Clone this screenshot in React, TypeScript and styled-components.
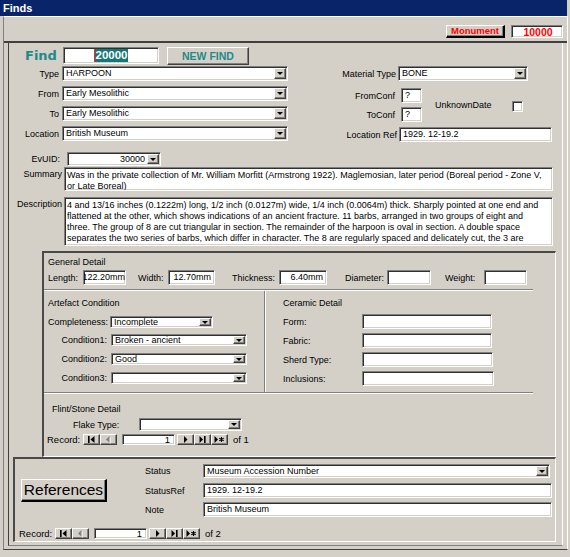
import React from "react";
import styled, { createGlobalStyle, css } from "styled-components";

const FACE = "#d4d0c8";
const SANS = `"Liberation Sans", Arial, sans-serif`;
const TEAL = "#1e8a8a";

const GlobalStyle = createGlobalStyle`
  html, body { margin: 0; padding: 0; background: ${FACE}; }
  body { font-family: ${SANS}; font-size: 9px; color: #000; }
  * { box-sizing: border-box; }
`;

const sunken = css`
  background: #fff;
  border: 1px solid;
  border-color: #808080 #fff #fff #808080;
  box-shadow: inset 1px 1px 0 #303030, inset -1px -1px 0 ${FACE};
`;

const raised = css`
  background: ${FACE};
  border: 1px solid;
  border-color: #fff #404040 #404040 #fff;
  box-shadow: inset -1px -1px 0 #808080;
`;

const Window = styled.div`
  width: 570px;
  height: 557px;
  background: ${FACE};
  display: flex;
  flex-direction: column;
  overflow: hidden;
  font-family: ${SANS};
  font-size: 9px;
`;

const TitleBar = styled.div`
  height: 16px;
  margin-right: 3px;
  background: #0a246a;
  color: #fff;
  font-weight: bold;
  font-size: 11px;
  line-height: 16px;
  padding-left: 3px;
`;

const FormArea = styled.div`
  height: 534px;
  margin: 0 2px 0 3px;
  display: flex;
  flex-direction: column;
  border-left: 1px solid #808080;
  border-top: 1px solid #fff;
  border-right: 1px solid #fff;
  border-bottom: 1px solid #404040;
`;

const Header = styled.div`
  height: 26px;
  flex: none;
  display: flex;
  justify-content: flex-end;
  align-items: flex-start;
  padding: 8px 4px 0 0;
  gap: 6px;
  border-bottom: 2px solid #404040;
`;

const ShadowButton = styled.div<{ $w: number; $h: number; $size: number; $color: string; $bold?: boolean }>`
  ${raised};
  width: ${(p) => p.$w}px;
  height: ${(p) => p.$h}px;
  display: flex;
  align-items: center;
  justify-content: center;
  font-size: ${(p) => p.$size}px;
  font-weight: ${(p) => (p.$bold ? "bold" : "normal")};
  color: ${(p) => p.$color};
  border-right: 2px solid #000;
  border-bottom: 2px solid #000;
  line-height: 1;
`;

const MonumentBox = styled.div`
  ${sunken};
  width: 52px;
  height: 13px;
  font-weight: bold;
  font-size: 10.5px;
  color: #ff0000;
  display: flex;
  align-items: center;
  justify-content: center;
  padding-left: 2px;
`;

const Detail = styled.div`
  flex: 1;
  display: flex;
  padding: 0 4px 3px 4px;
`;

const DetailFrame = styled.div`
  flex: 1;
  display: flex;
  flex-direction: column;
  border-left: 1px solid #404040;
  border-right: 1px solid #fff;
  border-bottom: 1px solid #808080;
  padding-top: 4px;
`;

const Row = styled.div<{ $mt?: number; $h?: number; $ml?: number }>`
  display: flex;
  align-items: center;
  flex: none;
  height: ${(p) => p.$h ?? 15}px;
  margin-top: ${(p) => p.$mt ?? 0}px;
  margin-left: ${(p) => p.$ml ?? 0}px;
`;

const TopRow = styled(Row)`
  align-items: flex-start;
`;

const Label = styled.span<{ $w: number; $align?: "left" | "right"; $pr?: number; $ml?: number; $mt?: number }>`
  flex: none;
  width: ${(p) => p.$w}px;
  margin-left: ${(p) => p.$ml ?? 0}px;
  margin-top: ${(p) => p.$mt ?? 0}px;
  padding-right: ${(p) => p.$pr ?? 0}px;
  text-align: ${(p) => p.$align ?? "left"};
  white-space: nowrap;
  line-height: 12px;
`;

const FindLabel = styled.span`
  width: 38px;
  margin-left: 16px;
  font-family: "DejaVu Sans", sans-serif;
  font-weight: bold;
  font-size: 13px;
  color: ${TEAL};
  line-height: 17px;
`;

const FindBox = styled.div`
  ${sunken};
  width: 96px;
  height: 17px;
  display: flex;
  align-items: center;
  justify-content: center;
`;

const Selected = styled.span`
  background: #137878;
  color: #fff;
  font-weight: bold;
  font-size: 11.5px;
  line-height: 13px;
  padding: 0 1px;
  border-left: 1px solid #ff2020;
`;

const NewFindButton = styled.div`
  ${raised};
  width: 82px;
  height: 18px;
  margin-left: 8px;
  display: flex;
  align-items: center;
  justify-content: center;
  font-weight: bold;
  font-size: 10.5px;
  color: ${TEAL};
`;

const Columns = styled.div`
  display: flex;
  margin-top: 1px;
`;

const LeftCol = styled.div`
  width: 279px;
  display: flex;
  flex-direction: column;
`;

const RightCol = styled.div`
  flex: 1;
  display: flex;
  flex-direction: column;
`;

const Box = styled.div<{ $w: number; $h?: number; $ml?: number; $align?: "left" | "right"; $pad?: number }>`
  ${sunken};
  flex: none;
  width: ${(p) => p.$w}px;
  height: ${(p) => p.$h ?? 15}px;
  margin-left: ${(p) => p.$ml ?? 0}px;
  padding: 0 ${(p) => p.$pad ?? 3}px;
  display: flex;
  align-items: center;
  justify-content: ${(p) => (p.$align === "right" ? "flex-end" : "flex-start")};
  white-space: nowrap;
  overflow: hidden;
  line-height: 11px;
`;

const ComboFrame = styled.div<{ $w: number; $h?: number; $ml?: number }>`
  ${sunken};
  flex: none;
  width: ${(p) => p.$w}px;
  height: ${(p) => p.$h ?? 15}px;
  margin-left: ${(p) => p.$ml ?? 0}px;
  display: flex;
  align-items: stretch;
  padding: 1px;
`;

const ComboValue = styled.span<{ $align?: "left" | "right" }>`
  flex: 1;
  display: flex;
  align-items: center;
  justify-content: ${(p) => (p.$align === "right" ? "flex-end" : "flex-start")};
  padding: 0 2px;
  white-space: nowrap;
  overflow: hidden;
  line-height: 11px;
`;

const DropButton = styled.span`
  ${raised};
  flex: none;
  width: 12px;
  display: flex;
  align-items: center;
  justify-content: center;
  &::after {
    content: "";
    display: block;
    width: 0;
    height: 0;
    border-left: 3px solid transparent;
    border-right: 3px solid transparent;
    border-top: 3px solid #000;
  }
`;

type ComboProps = { w: number; h?: number; ml?: number; value?: string; align?: "left" | "right" };
const Combo = ({ w, h, ml, value, align }: ComboProps) => (
  <ComboFrame $w={w} $h={h} $ml={ml}>
    <ComboValue $align={align}>{value}</ComboValue>
    <DropButton />
  </ComboFrame>
);

const ConfBlock = styled.div`
  display: flex;
  align-items: center;
  margin-top: 7px;
  height: 34px;
`;

const ConfCol = styled.div`
  display: flex;
  flex-direction: column;
  gap: 4px;
`;

const CheckBox = styled.span`
  ${sunken};
  width: 11px;
  height: 11px;
  margin-top: 3px;
`;

const MemoBox = styled.div<{ $h: number }>`
  ${sunken};
  width: 489px;
  height: ${(p) => p.$h}px;
  padding: 2px 2px 0 2px;
  overflow: hidden;
  line-height: 11px;
`;

const MemoLine = styled.div`
  white-space: nowrap;
  height: 11px;
`;

const SubFrame = styled.div<{ $ml: number; $w: number; $h: number; $mt?: number }>`
  flex: none;
  margin-left: ${(p) => p.$ml}px;
  margin-top: ${(p) => p.$mt ?? 0}px;
  width: ${(p) => p.$w}px;
  height: ${(p) => p.$h}px;
  border-style: solid;
  border-width: 2px 1px 1px 2px;
  border-color: #4a4a4a #fff #fff #4a4a4a;
  display: flex;
  flex-direction: column;
`;

const SectionTitle = styled.div<{ $mt: number; $pl: number }>`
  margin-top: ${(p) => p.$mt}px;
  padding-left: ${(p) => p.$pl}px;
  height: 12px;
  line-height: 12px;
  flex: none;
`;

const EtchedH = styled.div<{ $w: number; $mt?: number }>`
  flex: none;
  width: ${(p) => p.$w}px;
  height: 2px;
  margin-top: ${(p) => p.$mt ?? 0}px;
  border-top: 1px solid #808080;
  border-bottom: 1px solid #fff;
`;

const EtchedV = styled.div`
  flex: none;
  width: 2px;
  border-left: 1px solid #808080;
  border-right: 1px solid #fff;
`;

const Middle = styled.div`
  display: flex;
  height: 101px;
  flex: none;
`;

const SubCol = styled.div<{ $w: number }>`
  width: ${(p) => p.$w}px;
  display: flex;
  flex-direction: column;
`;

const NavBar = styled.div<{ $mt: number; $ml: number }>`
  display: flex;
  align-items: center;
  height: 11px;
  flex: none;
  margin-top: ${(p) => p.$mt}px;
  margin-left: ${(p) => p.$ml}px;
  font-size: 9.5px;
`;

const NavLabel = styled.span`
  width: 36px;
  line-height: 11px;
`;

const NavButton = styled.span<{ $gap?: number }>`
  ${raised};
  width: 17px;
  height: 11px;
  margin-left: ${(p) => p.$gap ?? 0}px;
  display: flex;
  align-items: center;
  justify-content: center;
  svg { display: block; }
`;

const NavBox = styled.span`
  ${sunken};
  width: 53px;
  height: 11px;
  margin-left: 5px;
  display: flex;
  align-items: center;
  justify-content: flex-end;
  padding-right: 4px;
  line-height: 9px;
`;

const NavOf = styled.span`
  margin-left: 5px;
  line-height: 11px;
`;

type Glyph = "first" | "prev" | "next" | "last" | "new";
const NavGlyph = ({ kind }: { kind: Glyph }) => {
  if (kind === "first")
    return (
      <svg width="9" height="7" viewBox="0 0 9 7">
        <rect x="1" y="0" width="1.6" height="7" fill="#000" />
        <polygon points="7.5,0 3.5,3.5 7.5,7" fill="#000" />
      </svg>
    );
  if (kind === "prev")
    return (
      <svg width="9" height="8" viewBox="0 0 9 8">
        <polygon points="6.5,1 3,4.5 6.5,8" fill="#fff" />
        <polygon points="5.5,0 2,3.5 5.5,7" fill="#808080" />
      </svg>
    );
  if (kind === "next")
    return (
      <svg width="9" height="7" viewBox="0 0 9 7">
        <polygon points="3,0 6.5,3.5 3,7" fill="#000" />
      </svg>
    );
  if (kind === "last")
    return (
      <svg width="9" height="7" viewBox="0 0 9 7">
        <polygon points="1.5,0 5,3.5 1.5,7" fill="#000" />
        <rect x="6" y="0" width="1.6" height="7" fill="#000" />
      </svg>
    );
  return (
    <svg width="11" height="7" viewBox="0 0 11 7">
      <polygon points="0.5,0 4,3.5 0.5,7" fill="#000" />
      <path d="M7.5 1 V6 M5.3 2.2 L9.7 4.8 M5.3 4.8 L9.7 2.2" stroke="#000" strokeWidth="1.1" />
    </svg>
  );
};

const RecordNav = ({ mt, ml, total }: { mt: number; ml: number; total: number }) => (
  <NavBar $mt={mt} $ml={ml}>
    <NavLabel>Record:</NavLabel>
    <NavButton><NavGlyph kind="first" /></NavButton>
    <NavButton><NavGlyph kind="prev" /></NavButton>
    <NavBox>1</NavBox>
    <NavButton $gap={2}><NavGlyph kind="next" /></NavButton>
    <NavButton><NavGlyph kind="last" /></NavButton>
    <NavButton><NavGlyph kind="new" /></NavButton>
    <NavOf>of {total}</NavOf>
  </NavBar>
);

const RefTop = styled.div`
  display: flex;
  height: 61px;
  flex: none;
`;

const RefButtonArea = styled.div`
  width: 130px;
  display: flex;
  align-items: center;
  padding: 2px 0 0 6px;
`;

const RefFields = styled.div`
  display: flex;
  flex-direction: column;
  padding-top: 5px;
`;

export default function App() {
  return (
    <>
      <GlobalStyle />
      <Window>
        <TitleBar>Finds</TitleBar>
        <FormArea>
          <Header>
            <ShadowButton $w={59} $h={13} $size={9.5} $color="#ff0000" $bold>
              Monument
            </ShadowButton>
            <MonumentBox>10000</MonumentBox>
          </Header>
          <Detail>
            <DetailFrame>
              <TopRow $h={18}>
                <FindLabel>Find</FindLabel>
                <FindBox>
                  <Selected>20000</Selected>
                </FindBox>
                <NewFindButton>NEW FIND</NewFindButton>
              </TopRow>
              <Columns>
                <LeftCol>
                  <Row>
                    <Label $w={53} $align="right" $pr={3}>Type</Label>
                    <Combo w={226} value="HARPOON" />
                  </Row>
                  <Row $mt={5}>
                    <Label $w={53} $align="right" $pr={3}>From</Label>
                    <Combo w={226} value="Early Mesolithic" />
                  </Row>
                  <Row $mt={5}>
                    <Label $w={53} $align="right" $pr={3}>To</Label>
                    <Combo w={226} value="Early Mesolithic" />
                  </Row>
                  <Row $mt={5}>
                    <Label $w={53} $align="right" $pr={3}>Location</Label>
                    <Combo w={226} value="British Museum" />
                  </Row>
                  <Row $mt={11} $h={14}>
                    <Label $w={53} $align="right" $pr={2}>EvUID:</Label>
                    <Combo w={94} h={14} ml={5} value="30000" align="right" />
                  </Row>
                </LeftCol>
                <RightCol>
                  <Row>
                    <Label $w={110} $align="right" $pr={2}>Material Type</Label>
                    <Combo w={130} value="BONE" />
                  </Row>
                  <ConfBlock>
                    <ConfCol>
                      <Row>
                        <Label $w={110} $align="right" $pr={3}>FromConf</Label>
                        <Box $w={21} $ml={3}>?</Box>
                      </Row>
                      <Row>
                        <Label $w={110} $align="right" $pr={3}>ToConf</Label>
                        <Box $w={21} $ml={3}>?</Box>
                      </Row>
                    </ConfCol>
                    <Label $w={77} $ml={13}>UnknownDate</Label>
                    <CheckBox />
                  </ConfBlock>
                  <Row $mt={5}>
                    <Label $w={111} $align="right" $pr={2}>Location Ref</Label>
                    <Box $w={153}>1929. 12-19.2</Box>
                  </Row>
                </RightCol>
              </Columns>
              <TopRow $mt={1} $h={24}>
                <Label $w={55} $align="right" $pr={2} $mt={1}>Summary</Label>
                <MemoBox $h={24}>
                  <MemoLine>Was in the private collection of Mr. William Morfitt (Armstrong 1922). Maglemosian, later period (Boreal period - Zone V,</MemoLine>
                  <MemoLine>or Late Boreal)</MemoLine>
                </MemoBox>
              </TopRow>
              <TopRow $mt={6} $h={49}>
                <Label $w={55} $align="right" $pr={2} $mt={1}>Description</Label>
                <MemoBox $h={49}>
                  <MemoLine>4 and 13/16 inches (0.1222m) long, 1/2 inch (0.0127m) wide, 1/4 inch (0.0064m) thick. Sharply pointed at one end and</MemoLine>
                  <MemoLine>flattened at the other, which shows indications of an ancient fracture. 11 barbs, arranged in two groups of eight and</MemoLine>
                  <MemoLine>three. The group of 8 are cut triangular in section. The remainder of the harpoon is oval in section. A double space</MemoLine>
                  <MemoLine>separates the two series of barbs, which differ in character. The 8 are regularly spaced and delicately cut, the 3 are</MemoLine>
                </MemoBox>
              </TopRow>

              <SubFrame $ml={33} $mt={5} $w={514} $h={206}>
                <SectionTitle $mt={3} $pl={4}>General Detail</SectionTitle>
                <Row $mt={2}>
                  <Label $w={35} $ml={4}>Length:</Label>
                  <Box $w={43} $align="right" $pad={0}>122.20mm</Box>
                  <Label $w={30} $ml={12}>Width:</Label>
                  <Box $w={47} $align="right">12.70mm</Box>
                  <Label $w={47} $ml={17}>Thickness:</Label>
                  <Box $w={48} $align="right">6.40mm</Box>
                  <Label $w={42} $ml={18}>Diameter:</Label>
                  <Box $w={44} />
                  <Label $w={39} $ml={14}>Weight:</Label>
                  <Box $w={43} />
                </Row>
                <EtchedH $w={489} $mt={4} />
                <Middle>
                  <SubCol $w={220}>
                    <SectionTitle $mt={6} $pl={4}>Artefact Condition</SectionTitle>
                    <Row $mt={7} $h={12}>
                      <Label $w={59} $ml={4} $align="right">Completeness:</Label>
                      <Combo w={103} h={12} ml={3} value="Incomplete" />
                    </Row>
                    <Row $mt={6} $h={12}>
                      <Label $w={59} $ml={4} $align="right">Condition1:</Label>
                      <Combo w={136} h={12} ml={4} value="Broken - ancient" />
                    </Row>
                    <Row $mt={7} $h={12}>
                      <Label $w={59} $ml={4} $align="right">Condition2:</Label>
                      <Combo w={136} h={12} ml={4} value="Good" />
                    </Row>
                    <Row $mt={7} $h={12}>
                      <Label $w={59} $ml={4} $align="right">Condition3:</Label>
                      <Combo w={136} h={12} ml={4} value="" />
                    </Row>
                  </SubCol>
                  <EtchedV />
                  <SubCol $w={267}>
                    <SectionTitle $mt={6} $pl={17}>Ceramic Detail</SectionTitle>
                    <Row $mt={5}>
                      <Label $w={79} $ml={17}>Form:</Label>
                      <Box $w={130} />
                    </Row>
                    <Row $mt={4}>
                      <Label $w={79} $ml={17}>Fabric:</Label>
                      <Box $w={130} />
                    </Row>
                    <Row $mt={4}>
                      <Label $w={79} $ml={17}>Sherd Type:</Label>
                      <Box $w={131} />
                    </Row>
                    <Row $mt={4}>
                      <Label $w={79} $ml={17}>Inclusions:</Label>
                      <Box $w={132} />
                    </Row>
                  </SubCol>
                </Middle>
                <EtchedH $w={489} />
                <SectionTitle $mt={9} $pl={8}>Flint/Stone Detail</SectionTitle>
                <Row $mt={3} $h={13}>
                  <Label $w={66} $ml={29}>Flake Type:</Label>
                  <Combo w={103} h={13} value="" />
                </Row>
                <RecordNav mt={3} ml={3} total={1} />
              </SubFrame>

              <SubFrame $ml={4} $w={543} $h={85}>
                <RefTop>
                  <RefButtonArea>
                    <ShadowButton $w={86} $h={23} $size={15.5} $color="#000">
                      References
                    </ShadowButton>
                  </RefButtonArea>
                  <RefFields>
                    <Row $h={14}>
                      <Label $w={58}>Status</Label>
                      <Combo w={347} h={14} value="Museum Accession Number" />
                    </Row>
                    <Row $mt={5}>
                      <Label $w={58}>StatusRef</Label>
                      <Box $w={349}>1929. 12-19.2</Box>
                    </Row>
                    <Row $mt={4}>
                      <Label $w={58}>Note</Label>
                      <Box $w={349}>British Museum</Box>
                    </Row>
                  </RefFields>
                </RefTop>
                <RecordNav mt={8} ml={4} total={2} />
              </SubFrame>
            </DetailFrame>
          </Detail>
        </FormArea>
      </Window>
    </>
  );
}
